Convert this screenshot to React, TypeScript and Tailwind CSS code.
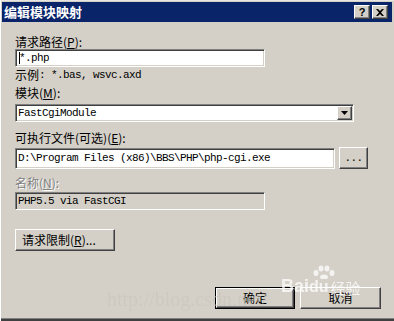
import React from "react";

const cjk = { fontFamily: '"Noto Sans CJK SC", "Noto Sans", sans-serif' };
const mono = { fontFamily: '"Liberation Mono", "DejaVu Sans Mono", monospace' };

const sunken =
  "border border-t-[#808080] border-l-[#808080] border-b-white border-r-white shadow-[inset_1px_1px_0_#404040,inset_-1px_-1px_0_#d4d0c8]";
const raised =
  "border border-t-white border-l-white border-b-[#404040] border-r-[#404040] shadow-[inset_-1px_-1px_0_#808080]";

function Acc({ k }: { k: string }) {
  return (
    <span>
      (<span className="underline">{k}</span>)
    </span>
  );
}

function Label({ children, disabled }: { children: React.ReactNode; disabled?: boolean }) {
  return (
    <div
      className={`h-[14px] leading-[14px] text-[12px] ${disabled ? "text-[#808080] [text-shadow:1px_1px_0_#ffffff]" : "text-black"}`}
      style={cjk}
    >
      {children}
    </div>
  );
}

function MonoText({ children }: { children: React.ReactNode }) {
  return (
    <span className="text-[11px] tracking-[-0.6px] text-black whitespace-nowrap" style={mono}>
      {children}
    </span>
  );
}

export default function App() {
  return (
    <div className="w-[394px] h-[321px] overflow-hidden relative bg-[#d4d0c8] border-l border-t border-l-white border-t-[#e8e6e0] flex flex-col">
      <div className="ml-[1px] mr-[2px] mt-[1px] h-[20px] bg-[#0a246a] flex items-center justify-between pl-[2px] pr-[4px]">
        <span className="text-white font-bold text-[13px] leading-[20px]" style={cjk}>
          编辑模块映射
        </span>
        <div className="flex gap-[2px]">
          <div className={`w-[16px] h-[14px] bg-[#d4d0c8] ${raised} flex items-center justify-center`}>
            <span className="text-[11px] font-bold leading-none text-black" style={{ fontFamily: '"Liberation Sans", sans-serif' }}>
              ?
            </span>
          </div>
          <div className={`w-[16px] h-[14px] bg-[#d4d0c8] ${raised} flex items-center justify-center`}>
            <svg width="8" height="7" viewBox="0 0 8 7">
              <path d="M0 0h2l2 2 2-2h2L5 3.5 8 7H6L4 5 2 7H0l3-3.5z" fill="#000" />
            </svg>
          </div>
        </div>
      </div>

      <div className="pl-[14px] flex flex-col">
        <div className="mt-[13px]">
          <Label>
            请求路径<Acc k="P" />:
          </Label>
        </div>
        <div className={`w-[250px] h-[18px] bg-white ${sunken} flex items-center pl-[3px]`}>
          <span className="w-[1px] h-[12px] bg-black mr-[-1px]" />
          <MonoText>*.php</MonoText>
        </div>

        <div className="mt-[1px] h-[14px] leading-[14px] text-[12px] flex items-center" style={cjk}>
          <span>示例</span>
          <MonoText>: *.bas, wsvc.axd</MonoText>
        </div>

        <div className="mt-[4px]">
          <Label>
            模块<Acc k="M" />:
          </Label>
        </div>
        <div className={`mt-[4px] w-[339px] h-[18px] bg-white ${sunken} flex items-center justify-between pl-[2px] pr-[1px]`}>
          <MonoText>FastCgiModule</MonoText>
          <div className={`w-[15px] h-[14px] bg-[#d4d0c8] ${raised} flex items-center justify-center`}>
            <svg width="7" height="4" viewBox="0 0 7 4">
              <path d="M0 0h7L3.5 4z" fill="#000" />
            </svg>
          </div>
        </div>

        <div className="mt-[9px]">
          <Label>
            可执行文件(可选)<Acc k="E" />:
          </Label>
        </div>
        <div className="mt-[2px] flex items-center gap-[4px]">
          <div className={`w-[320px] h-[21px] bg-white ${sunken} flex items-center pl-[2px]`}>
            <MonoText>D:\Program Files (x86)\BBS\PHP\php-cgi.exe</MonoText>
          </div>
          <div className={`w-[29px] h-[22px] bg-[#d4d0c8] ${raised} flex items-center justify-center`}>
            <MonoText>...</MonoText>
          </div>
        </div>

        <div className="mt-[7px]">
          <Label disabled>
            名称<Acc k="N" />:
          </Label>
        </div>
        <div className={`mt-[2px] w-[250px] h-[18px] bg-[#d4d0c8] ${sunken} flex items-center pl-[2px]`}>
          <MonoText>PHP5.5 via FastCGI</MonoText>
        </div>

        <div
          className={`mt-[19px] w-[100px] h-[22px] bg-[#d4d0c8] ${raised} flex items-center pl-[6px] text-[12px] text-black`}
          style={cjk}
        >
          请求限制<Acc k="R" />...
        </div>

        <div className="mt-[36px] ml-[200px] flex gap-[5px]">
          <div className="w-[80px] h-[22px] border border-black">
            <div className={`w-full h-full bg-[#d4d0c8] ${raised} flex items-center justify-center text-[12px]`} style={cjk}>
              确定
            </div>
          </div>
          <div className={`w-[81px] h-[22px] bg-[#d4d0c8] ${raised} flex items-center justify-center text-[12px]`} style={cjk}>
            取消
          </div>
        </div>
      </div>

      <div className="absolute left-0 right-0 bottom-0 h-[3px] border-t border-t-[#808080] bg-[#404040]" />

      <div
        className="absolute left-[106px] top-[288px] text-[20px] leading-[20px] text-[#c9c5bd] opacity-60 pointer-events-none whitespace-nowrap"
        style={{ fontFamily: '"Liberation Serif", serif' }}
      >
        http://blog.csdn.net/
      </div>
      <div className="absolute left-[280px] top-[264px] pointer-events-none flex flex-col items-start text-white opacity-75">
        <svg className="ml-[30px]" width="26" height="14" viewBox="0 0 26 14">
          <ellipse cx="5" cy="8" rx="2.5" ry="3" fill="#fff" />
          <ellipse cx="10" cy="3.5" rx="2.5" ry="3" fill="#fff" />
          <ellipse cx="16" cy="3.5" rx="2.5" ry="3" fill="#fff" />
          <ellipse cx="21" cy="8" rx="2.5" ry="3" fill="#fff" />
          <ellipse cx="13" cy="12" rx="4" ry="2.5" fill="#fff" />
        </svg>
        <div className="flex items-end -mt-[2px]">
          <span className="text-[18px] font-bold leading-none" style={{ fontFamily: '"Liberation Sans", sans-serif' }}>
            Bai
          </span>
          <span className="text-[16px] font-bold leading-none" style={{ fontFamily: '"Liberation Sans", sans-serif' }}>
            du
          </span>
          <span className="text-[15px] leading-none ml-[2px]" style={cjk}>
            经验
          </span>
        </div>
      </div>
    </div>
  );
}
